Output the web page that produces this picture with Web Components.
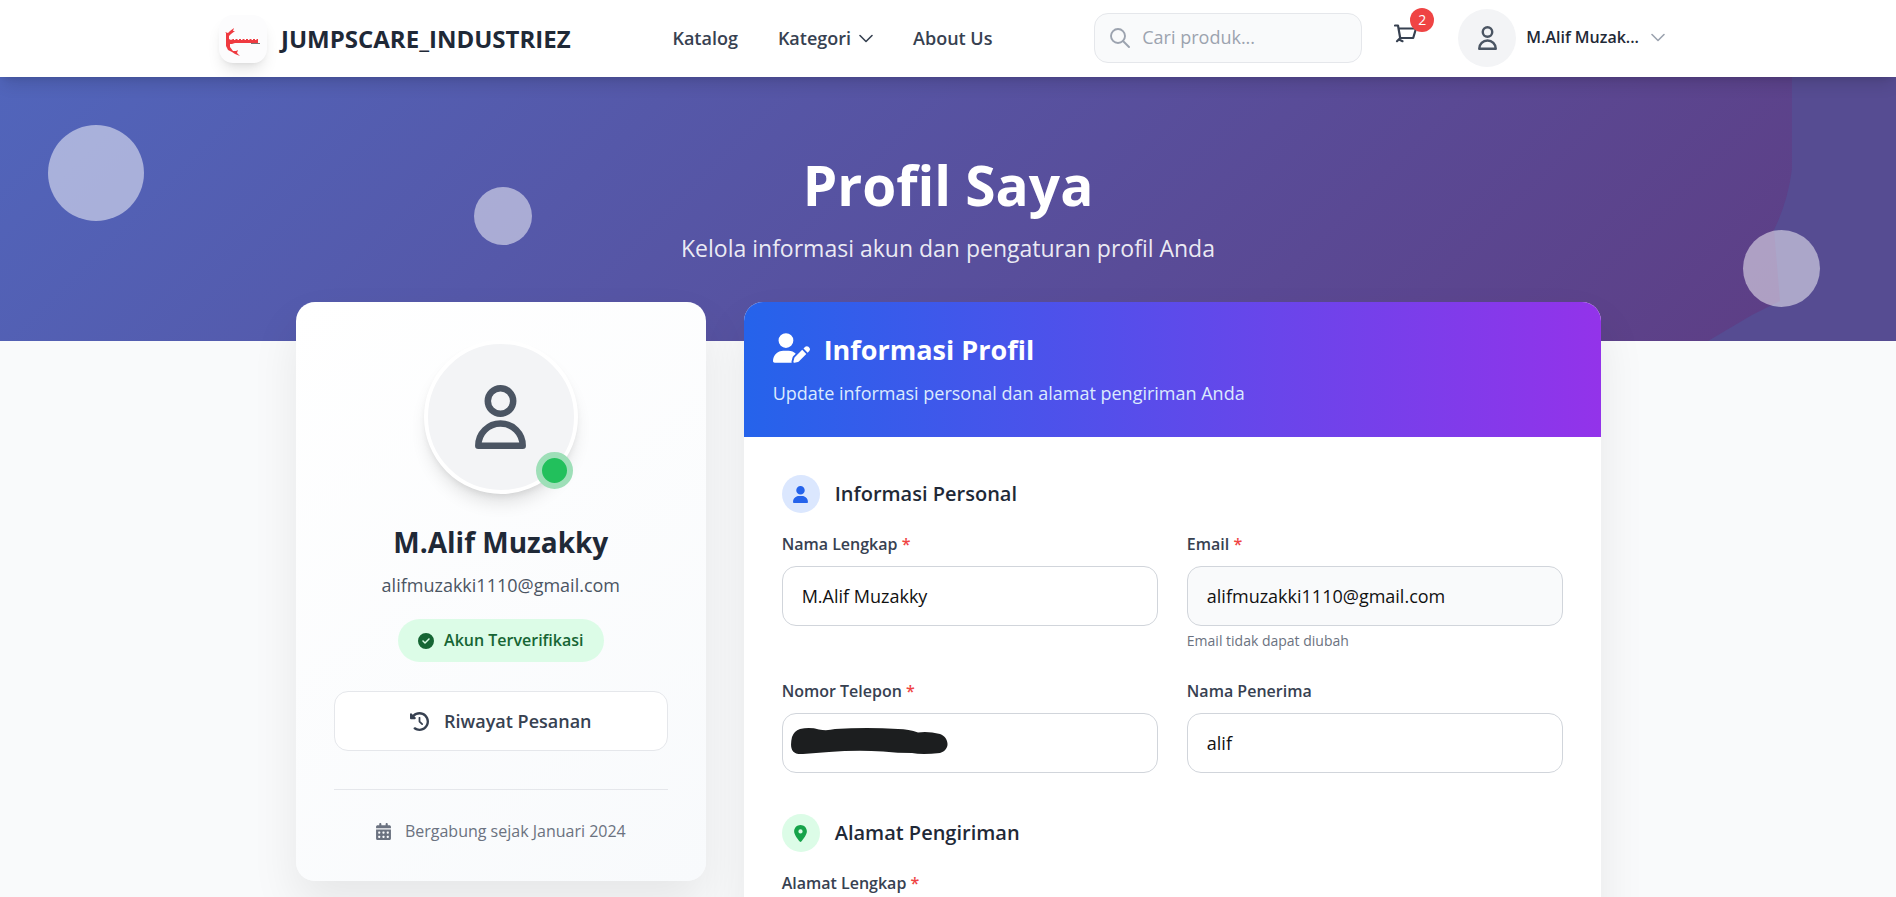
<!DOCTYPE html>
<html lang="id">
<head>
<meta charset="utf-8">
<meta name="viewport" content="width=device-width, initial-scale=1">
<title>Profil Saya</title>
<style>
  body {
    margin: 0;
    background: #f9fafb;
    color: #1f2937;
    font-family: "Open Sans", "Noto Sans", sans-serif;
    font-size: 18px;
    line-height: 29px;
  }
</style>
</head>
<body>
<profile-page></profile-page>

<script>
const icons = {
  user: ['0 0 448 512', '<path d="M224 256A128 128 0 1 0 224 0a128 128 0 1 0 0 256zm-45.7 48C79.8 304 0 383.8 0 482.3C0 498.7 13.3 512 29.7 512H418.3c16.4 0 29.7-13.3 29.7-29.7C448 383.8 368.2 304 269.7 304H178.3z"/>'],
  userPen: ['0 0 640 512', '<path d="M224 256A128 128 0 1 0 224 0a128 128 0 1 0 0 256zm-45.7 48C79.8 304 0 383.8 0 482.3C0 498.7 13.3 512 29.7 512H322.8c-3.1-8.8-3.7-18.4-1.4-27.8l15-60.1c2.8-11.3 8.6-21.5 16.8-29.7l40.3-40.3c-32.1-31-75.7-50.1-123.9-50.1H178.3zm435.5-68.3c-15.6-15.6-40.9-15.6-56.6 0l-29.4 29.4 71 71 29.4-29.4c15.6-15.6 15.6-40.9 0-56.6l-14.4-14.4zM375.9 417c-4.1 4.1-7 9.2-8.4 14.9l-15 60.1c-1.4 5.5 .2 11.2 4.2 15.2s9.7 5.6 15.2 4.2l60.1-15c5.6-1.4 10.8-4.3 14.9-8.4L576.1 358.7l-71-71L375.9 417z"/>'],
  check: ['0 0 512 512', '<path d="M256 512A256 256 0 1 0 256 0a256 256 0 1 0 0 512zM369 209L241 337c-9.4 9.4-24.6 9.4-33.9 0l-64-64c-9.4-9.4-9.4-24.6 0-33.9s24.6-9.4 33.9 0l47 47L335 175c9.4-9.4 24.6-9.4 33.9 0s9.4 24.6 0 33.9z"/>'],
  history: ['0 0 512 512', '<path d="M75 75L41 41C25.9 25.9 0 36.6 0 57.9V168c0 13.3 10.7 24 24 24H134.1c21.4 0 32.1-25.9 17-41l-30.8-30.8C155 85.5 203 64 256 64c106 0 192 86 192 192s-86 192-192 192c-40.8 0-78.6-12.7-109.7-34.4c-14.5-10.1-34.4-6.6-44.6 7.9s-6.6 34.4 7.9 44.6C151.2 495 201.7 512 256 512c141.4 0 256-114.6 256-256S397.4 0 256 0C185.3 0 121.3 28.7 75 75zm181 53c-13.3 0-24 10.7-24 24V256c0 6.4 2.5 12.5 7 17l72 72c9.4 9.4 24.6 9.4 33.9 0s9.4-24.6 0-33.9l-65-65V152c0-13.3-10.7-24-24-24z"/>'],
  calendar: ['0 0 448 512', '<path d="M128 0c17.7 0 32 14.3 32 32V64H288V32c0-17.7 14.3-32 32-32s32 14.3 32 32V64h48c26.5 0 48 21.5 48 48v48H0V112C0 85.5 21.5 64 48 64H96V32c0-17.7 14.3-32 32-32zM0 192H448V464c0 26.5-21.5 48-48 48H48c-26.5 0-48-21.5-48-48V192zm64 80v32c0 8.8 7.2 16 16 16h32c8.8 0 16-7.2 16-16V272c0-8.8-7.2-16-16-16H80c-8.8 0-16 7.2-16 16zm128 0v32c0 8.8 7.2 16 16 16h32c8.8 0 16-7.2 16-16V272c0-8.8-7.2-16-16-16H208c-8.8 0-16 7.2-16 16zm144-16c-8.8 0-16 7.2-16 16v32c0 8.8 7.2 16 16 16h32c8.8 0 16-7.2 16-16V272c0-8.8-7.2-16-16-16H336zM64 400v32c0 8.8 7.2 16 16 16h32c8.8 0 16-7.2 16-16V400c0-8.8-7.2-16-16-16H80c-8.8 0-16 7.2-16 16zm144-16c-8.8 0-16 7.2-16 16v32c0 8.8 7.2 16 16 16h32c8.8 0 16-7.2 16-16V400c0-8.8-7.2-16-16-16H208zm112 16v32c0 8.8 7.2 16 16 16h32c8.8 0 16-7.2 16-16V400c0-8.8-7.2-16-16-16H336c-8.8 0-16 7.2-16 16z"/>'],
  pin: ['0 0 384 512', '<path d="M215.7 499.2C267 435 384 279.4 384 192C384 86 298 0 192 0S0 86 0 192c0 87.4 117 243 168.3 307.2c12.3 15.3 35.1 15.3 47.4 0zM192 128a64 64 0 1 1 0 128 64 64 0 1 1 0-128z"/>'],
  person: ['0 0 51 64', '<g fill="none" stroke="currentColor" stroke-width="6.5" stroke-linejoin="round"><circle cx="25.5" cy="16" r="12.7"/><path d="M3.3 60.7a22.2 22.2 0 0 1 44.4 0z"/></g>'],
  chevron: ['0 0 14 9', '<path d="M1 1.5l6 6 6-6" fill="none" stroke="currentColor" stroke-width="1.6" stroke-linecap="round" stroke-linejoin="round"/>'],
  search: ['0 0 20 20', '<g fill="none" stroke="currentColor" stroke-width="1.9" stroke-linecap="round"><circle cx="8" cy="8" r="7"/><path d="M13 13l6 6"/></g>'],
  cart: ['0 0 24 20', '<g fill="none" stroke="currentColor" stroke-width="2.2" stroke-linecap="round" stroke-linejoin="round"><path d="M1 1.5h3l2.200 12.500h13L22 4.500H4.500"/><path d="M6.200 14l-3.200 3.200M5 15.500l3.500 1.700"/></g>'],
  logo: ['0 0 48 48', '<g fill="#ef3a40"><path d="M6 17l3 1 2-2 4-3-1 3 2 0-4 3-2 2v3l2 1 2-1h25v4H16l-3 1h-2v3l3 4 3 0 2-1-1 3 3 3-5-2-3-2-4-2-2-4V18z"/></g><path d="M15 24.500h23" stroke="#fff" stroke-width="1" stroke-dasharray="1.500 2"/><path d="M32 28.500h9" stroke="#777" stroke-width="1"/>']
};

function define(name, html, setup) {
  const template = document.createElement('template');
  template.innerHTML = html;
  customElements.define(name, class extends HTMLElement {
    constructor() {
      super();
      this.attachShadow({ mode: 'open' }).appendChild(template.content.cloneNode(true));
    }
    connectedCallback() {
      if (setup) setup(this, this.shadowRoot);
    }
  });
}

// size comes from the outside: width and height are set on the host
define('ui-icon', `
<style>
  :host { display: block; flex: none; }
  svg { display: block; width: 100%; height: 100%; }
</style>
<svg aria-hidden="true" fill="currentColor"></svg>
`, (el, root) => {
  const [viewBox, shape] = icons[el.getAttribute('name')];
  const svg = root.querySelector('svg');
  svg.setAttribute('viewBox', viewBox);
  svg.innerHTML = shape;
});

define('site-header', `
<style>
  :host {
    display: block;
    position: relative;
    z-index: 2;
    background: #fff;
    box-shadow: 0 10px 15px -3px rgba(0,0,0,.12), 0 4px 6px -4px rgba(0,0,0,.12);
  }
  .bar {
    box-sizing: border-box;
    max-width: 1536px;
    height: 77px;
    margin: 0 auto;
    padding: 0 39px;
    display: flex;
    align-items: center;
    justify-content: space-between;
  }
  a { color: inherit; text-decoration: none; }
  button { font: inherit; color: inherit; background: none; border: 0; padding: 0; }
  .brand { display: flex; align-items: center; gap: 14px; font-size: 24px; font-weight: 700; }
  .logo {
    width: 48px;
    height: 48px;
    border-radius: 14px;
    background: #fcfcfd;
    box-shadow: 0 10px 15px -3px rgba(0,0,0,.1), 0 4px 6px -4px rgba(0,0,0,.1);
  }
  nav { display: flex; gap: 40px; color: #374151; font-weight: 600; }
  nav button { display: flex; align-items: center; gap: 8px; }
  .chevron { width: 14px; height: 9px; }
  .tools { display: flex; align-items: center; padding-bottom: 2px; }
  .search {
    box-sizing: border-box;
    display: flex;
    align-items: center;
    gap: 12px;
    width: 268px;
    height: 50px;
    padding: 0 15px;
    border: 1px solid #e5e7eb;
    border-radius: 14px;
    background: #f9fafb;
    color: #9ca3af;
  }
  .search ui-icon { width: 20px; height: 20px; }
  input {
    flex: 1;
    min-width: 0;
    border: 0;
    padding: 0;
    background: none;
    font: inherit;
    outline: none;
  }
  input::placeholder { color: #9ca3af; }
  .cart { position: relative; margin: 0 24px 8px 32px; color: #374151; }
  .cart ui-icon { width: 24px; height: 20px; }
  .badge {
    position: absolute;
    right: -16px;
    top: -16px;
    width: 24px;
    border-radius: 12px;
    background: #ef4444;
    color: #fff;
    font-size: 14px;
    line-height: 24px;
    text-align: center;
  }
  .account { display: flex; align-items: center; gap: 10px; font-size: 16px; font-weight: 600; margin-left: 16px; }
  .account .chevron { color: #9ca3af; margin: 0 12px 0 2px; }
  .avatar {
    display: grid;
    place-items: center;
    width: 58px;
    height: 58px;
    border-radius: 50%;
    background: #f3f4f6;
    color: #4b5563;
  }
  .avatar ui-icon { width: 19px; height: 24px; }
</style>
<div class="bar">
  <a class="brand" href="#"><ui-icon class="logo" name="logo"></ui-icon>JUMPSCARE_INDUSTRIEZ</a>
  <nav>
    <a href="#">Katalog</a>
    <button type="button">Kategori <ui-icon class="chevron" name="chevron"></ui-icon></button>
    <a href="#">About Us</a>
  </nav>
  <div class="tools">
    <label class="search"><ui-icon name="search"></ui-icon><input type="search" placeholder="Cari produk..."></label>
    <a class="cart" href="#"><ui-icon name="cart"></ui-icon><span class="badge">2</span></a>
    <button class="account" type="button">
      <span class="avatar"><ui-icon name="person"></ui-icon></span>
      M.Alif Muzak...
      <ui-icon class="chevron" name="chevron"></ui-icon>
    </button>
  </div>
</div>
`);

define('hero-banner', `
<style>
  :host {
    display: block;
    position: relative;
    overflow: hidden;
    padding: 77px 38px 76px;
    background: linear-gradient(135deg, #5165bb, #5e3c82);
    color: #fff;
    text-align: center;
  }
  .bubble {
    position: absolute;
    border-radius: 50%;
    background: rgba(255,255,255,.5);
  }
  .one { left: 48px; top: 48px; width: 96px; height: 96px; }
  .two { left: 25%; top: 110px; width: 58px; height: 58px; }
  .three { right: 76px; bottom: 34px; width: 77px; height: 77px; }
  .shade { position: absolute; right: 0; top: 0; width: 188px; height: 100%; }
  h1 { margin: 0 0 15px; font-size: 55px; line-height: 62px; }
  p { margin: 0; font-size: 23px; line-height: 34px; color: rgba(255,255,255,.9); }
</style>
<svg class="shade" viewBox="0 0 188 264" preserveAspectRatio="none" fill="#564c92" aria-hidden="true"><path d="M84 0V92Q80 124 66 153L72 224 44 238 0 264H188V0z"/></svg>
<span class="bubble one"></span>
<span class="bubble two"></span>
<span class="bubble three"></span>
<h1><slot></slot></h1>
<p><slot name="lead"></slot></p>
`);

define('account-card', `
<style>
  :host {
    display: flex;
    flex-direction: column;
    align-items: center;
    padding: 38px;
    border-radius: 19px;
    background: linear-gradient(145deg, #fff, #f8fafc);
    box-shadow: 0 24px 48px rgba(0,0,0,.08);
    text-align: center;
  }
  .avatar {
    position: relative;
    box-sizing: border-box;
    display: grid;
    place-items: center;
    width: 154px;
    height: 154px;
    margin-bottom: 29px;
    border: 4px solid #fff;
    border-radius: 50%;
    background: #f3f4f6;
    color: #4b5563;
    box-shadow: 0 12px 18px -4px rgba(0,0,0,.12), 0 4px 8px -4px rgba(0,0,0,.12);
  }
  .avatar ui-icon { width: 51px; height: 64px; }
  .online {
    position: absolute;
    right: 1px;
    bottom: 1px;
    width: 25px;
    height: 25px;
    border: 6px solid #9edfb8;
    border-radius: 50%;
    background: #22c05c;
  }
  h2 { margin: 0 0 10px; font-size: 28px; line-height: 38px; }
  .mail { margin: 0 0 19px; color: #4b5563; }
  .verified {
    display: flex;
    align-items: center;
    gap: 10px;
    height: 43px;
    margin-bottom: 29px;
    padding: 0 20px;
    border-radius: 22px;
    background: #dcfce7;
    color: #166534;
    font-size: 16px;
    font-weight: 600;
  }
  .verified ui-icon { width: 16px; height: 16px; }
  .orders {
    box-sizing: border-box;
    display: flex;
    align-items: center;
    justify-content: center;
    gap: 15px;
    width: 100%;
    height: 60px;
    border: 1px solid #e5e7eb;
    border-radius: 14px;
    background: #fff;
    color: #374151;
    font-weight: 600;
    text-decoration: none;
  }
  .orders ui-icon { width: 19px; height: 19px; }
  .joined {
    display: flex;
    justify-content: center;
    align-items: center;
    gap: 14px;
    width: 100%;
    margin-top: 38px;
    padding-top: 29px;
    border-top: 1px solid #e5e7eb;
    color: #6b7280;
    font-size: 16px;
    line-height: 24px;
  }
  .joined ui-icon { width: 15px; height: 17px; }
</style>
<div class="avatar"><ui-icon name="person"></ui-icon><span class="online"></span></div>
<h2><slot></slot></h2>
<p class="mail"><slot name="mail"></slot></p>
<span class="verified"><ui-icon name="check"></ui-icon>Akun Terverifikasi</span>
<a class="orders" href="#"><ui-icon name="history"></ui-icon>Riwayat Pesanan</a>
<div class="joined"><ui-icon name="calendar"></ui-icon><slot name="joined"></slot></div>
`);

define('form-card', `
<style>
  :host {
    display: block;
    overflow: hidden;
    border-radius: 19px;
    background: #fff;
    box-shadow: 0 24px 48px rgba(0,0,0,.08);
  }
  header {
    padding: 29px;
    background: linear-gradient(90deg, #2563eb, #9333ea);
    color: #fff;
  }
  h2 { display: flex; align-items: center; gap: 14px; margin: 0 0 10px; font-size: 27px; line-height: 38px; }
  h2 ui-icon { width: 37px; height: 30px; margin-bottom: 4px; }
  p { margin: 0; color: #dbeafe; }
  form { display: grid; gap: 36px; padding: 38px; }
</style>
<header>
  <h2><ui-icon name="userPen"></ui-icon><slot name="title"></slot></h2>
  <p><slot name="lead"></slot></p>
</header>
<form><slot></slot></form>
`);

define('form-section', `
<style>
  :host { display: block; }
  h3 { display: flex; align-items: center; gap: 15px; margin: 0 0 19px; font-size: 20px; line-height: 38px; font-weight: 600; }
  .mark { display: grid; place-items: center; width: 38px; height: 38px; border-radius: 50%; background: #dbe7fe; color: #2563eb; }
  .mark ui-icon { width: 15px; height: 17px; }
  :host([icon=pin]) .mark { background: #dcfce7; color: #16a34a; }
  .grid { display: grid; grid-template-columns: 1fr 1fr; gap: 29px; }
</style>
<h3><span class="mark"></span><slot name="title"></slot></h3>
<div class="grid"><slot></slot></div>
`, (el, root) => {
  const icon = document.createElement('ui-icon');
  icon.setAttribute('name', el.getAttribute('icon'));
  root.querySelector('.mark').replaceChildren(icon);
});

define('text-field', `
<style>
  :host { display: block; }
  :host([wide]) { grid-column: 1 / -1; }
  label { display: block; margin-bottom: 9px; color: #374151; font-size: 16px; line-height: 25px; font-weight: 600; }
  .star { color: #ef4444; }
  .box { position: relative; }
  input {
    box-sizing: border-box;
    display: block;
    width: 100%;
    height: 60px;
    padding: 0 19px;
    border: 1px solid #d1d5db;
    border-radius: 14px;
    background: #fff;
    color: #111;
    font: inherit;
  }
  input:read-only { background: #f9fafb; }
  ::slotted(svg) { position: absolute; left: 9px; top: 15px; }
  .hint { display: block; margin-top: 5px; color: #6b7280; font-size: 14px; line-height: 19px; }
</style>
<label for="field"><slot name="label"></slot></label>
<div class="box"><input id="field"><slot></slot></div>
<slot class="hint" name="hint"></slot>
`, (el, root) => {
  const input = root.querySelector('input');
  input.value = el.getAttribute('value') || '';
  input.type = el.getAttribute('type') || 'text';
  input.readOnly = el.hasAttribute('readonly');
  if (el.hasAttribute('required')) {
    input.required = true;
    root.querySelector('label').insertAdjacentHTML('beforeend', ' <span class="star">*</span>');
  }
});

define('profile-page', `
<style>
  :host { display: block; }
  main {
    box-sizing: border-box;
    position: relative;
    max-width: 1382px;
    margin: -39px auto 0;
    padding: 0 38px 77px 39px;
    display: grid;
    grid-template-columns: repeat(3, 1fr);
    gap: 38px;
    align-items: start;
  }
  form-card { grid-column: span 2; }
</style>
<site-header></site-header>
<hero-banner>Profil Saya<span slot="lead">Kelola informasi akun dan pengaturan profil Anda</span></hero-banner>
<main>
  <account-card>
    M.Alif Muzakky
    <span slot="mail">alifmuzakki1110@gmail.com</span>
    <span slot="joined">Bergabung sejak Januari 2024</span>
  </account-card>
  <form-card>
    <span slot="title">Informasi Profil</span>
    <span slot="lead">Update informasi personal dan alamat pengiriman Anda</span>
    <form-section icon="user">
      <span slot="title">Informasi Personal</span>
      <text-field value="M.Alif Muzakky" required><span slot="label">Nama Lengkap</span></text-field>
      <text-field value="alifmuzakki1110@gmail.com" type="email" readonly required>
        <span slot="label">Email</span>
        <span slot="hint">Email tidak dapat diubah</span>
      </text-field>
      <text-field type="tel" required>
        <span slot="label">Nomor Telepon</span>
        <svg width="158" height="27" viewBox="0 0 158 27" fill="#1c1e1f"><path d="M9 1Q19-1 28 1.500 36 3 44 1 76-1 107 1 118 1 127 4.500 137 3 149 6C158 9 160 22 149 25Q131 27 121 25 107 25 92 23.500 65 22 38 24L12 26C-1 27-1 18 1 9Q3 3 9 1z"/></svg>
      </text-field>
      <text-field value="alif"><span slot="label">Nama Penerima</span></text-field>
    </form-section>
    <form-section icon="pin">
      <span slot="title">Alamat Pengiriman</span>
      <text-field wide required><span slot="label">Alamat Lengkap</span></text-field>
    </form-section>
  </form-card>
</main>
`);
</script>
</body>
</html>
